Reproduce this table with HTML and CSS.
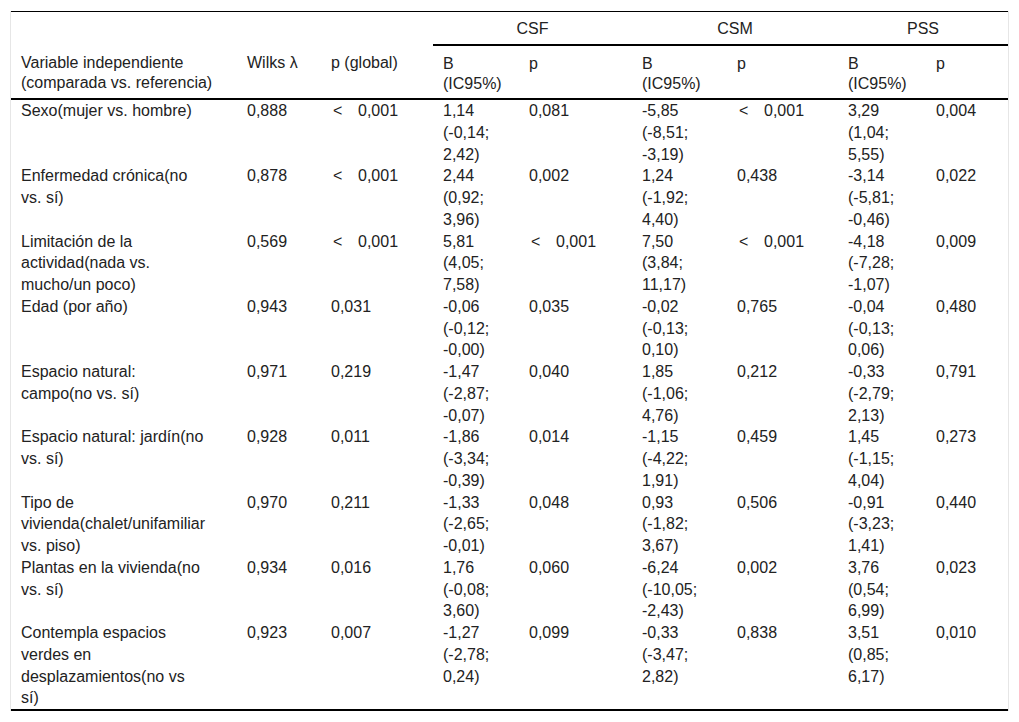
FILE: index.html
```html
<!DOCTYPE html>
<html lang="es">

<head>
    <meta charset="UTF-8">
    <meta name="viewport" content="width=device-width, initial-scale=1.0">
    <title>Análisis multivariante</title>
    <link rel="stylesheet" href="styles.css">
</head>

<body>
    <div class="table-wrap">
        <table class="results">
            <colgroup>
                <col class="c-var">
                <col class="c-wilks">
                <col class="c-pglobal">
                <col class="c-b1">
                <col class="c-p1">
                <col class="c-b2">
                <col class="c-p2">
                <col class="c-b3">
                <col class="c-p3">
            </colgroup>
            <thead>
                <tr class="head-groups">
                    <th></th>
                    <th></th>
                    <th></th>
                    <th colspan="2" class="group">CSF</th>
                    <th colspan="2" class="group">CSM</th>
                    <th colspan="2" class="group">PSS</th>
                </tr>
                <tr class="head-cols">
                    <th>Variable independiente<br>(comparada vs. referencia)</th>
                    <th>Wilks λ</th>
                    <th>p (global)</th>
                    <th>B<br>(IC95%)</th>
                    <th>p</th>
                    <th>B<br>(IC95%)</th>
                    <th>p</th>
                    <th>B<br>(IC95%)</th>
                    <th>p</th>
                </tr>
            </thead>
            <tbody>
                <tr>
                    <td><div class="var">Sexo(mujer vs. hombre)</div></td>
                    <td>0,888</td>
                    <td><span class="lt">&lt;</span>0,001</td>
                    <td><div class="est">1,14 (-0,14; 2,42)</div></td>
                    <td>0,081</td>
                    <td><div class="est">-5,85 (-8,51; -3,19)</div></td>
                    <td><span class="lt">&lt;</span>0,001</td>
                    <td><div class="est">3,29 (1,04; 5,55)</div></td>
                    <td>0,004</td>
                </tr>
                <tr>
                    <td><div class="var">Enfermedad crónica(no vs. sí)</div></td>
                    <td>0,878</td>
                    <td><span class="lt">&lt;</span>0,001</td>
                    <td><div class="est">2,44 (0,92; 3,96)</div></td>
                    <td>0,002</td>
                    <td><div class="est">1,24 (-1,92; 4,40)</div></td>
                    <td>0,438</td>
                    <td><div class="est">-3,14 (-5,81; -0,46)</div></td>
                    <td>0,022</td>
                </tr>
                <tr>
                    <td><div class="var">Limitación de la actividad(nada vs. mucho/un poco)</div></td>
                    <td>0,569</td>
                    <td><span class="lt">&lt;</span>0,001</td>
                    <td><div class="est">5,81 (4,05; 7,58)</div></td>
                    <td><span class="lt">&lt;</span>0,001</td>
                    <td><div class="est">7,50 (3,84; 11,17)</div></td>
                    <td><span class="lt">&lt;</span>0,001</td>
                    <td><div class="est">-4,18 (-7,28; -1,07)</div></td>
                    <td>0,009</td>
                </tr>
                <tr>
                    <td><div class="var">Edad (por año)</div></td>
                    <td>0,943</td>
                    <td>0,031</td>
                    <td><div class="est">-0,06 (-0,12; -0,00)</div></td>
                    <td>0,035</td>
                    <td><div class="est">-0,02 (-0,13; 0,10)</div></td>
                    <td>0,765</td>
                    <td><div class="est">-0,04 (-0,13; 0,06)</div></td>
                    <td>0,480</td>
                </tr>
                <tr>
                    <td><div class="var">Espacio natural: campo(no vs. sí)</div></td>
                    <td>0,971</td>
                    <td>0,219</td>
                    <td><div class="est">-1,47 (-2,87; -0,07)</div></td>
                    <td>0,040</td>
                    <td><div class="est">1,85 (-1,06; 4,76)</div></td>
                    <td>0,212</td>
                    <td><div class="est">-0,33 (-2,79; 2,13)</div></td>
                    <td>0,791</td>
                </tr>
                <tr>
                    <td><div class="var">Espacio natural: jardín(no vs. sí)</div></td>
                    <td>0,928</td>
                    <td>0,011</td>
                    <td><div class="est">-1,86 (-3,34; -0,39)</div></td>
                    <td>0,014</td>
                    <td><div class="est">-1,15 (-4,22; 1,91)</div></td>
                    <td>0,459</td>
                    <td><div class="est">1,45 (-1,15; 4,04)</div></td>
                    <td>0,273</td>
                </tr>
                <tr>
                    <td><div class="var">Tipo de vivienda(chalet/unifamiliar vs. piso)</div></td>
                    <td>0,970</td>
                    <td>0,211</td>
                    <td><div class="est">-1,33 (-2,65; -0,01)</div></td>
                    <td>0,048</td>
                    <td><div class="est">0,93 (-1,82; 3,67)</div></td>
                    <td>0,506</td>
                    <td><div class="est">-0,91 (-3,23; 1,41)</div></td>
                    <td>0,440</td>
                </tr>
                <tr>
                    <td><div class="var">Plantas en la vivienda(no vs. sí)</div></td>
                    <td>0,934</td>
                    <td>0,016</td>
                    <td><div class="est">1,76 (-0,08; 3,60)</div></td>
                    <td>0,060</td>
                    <td><div class="est">-6,24 (-10,05; -2,43)</div></td>
                    <td>0,002</td>
                    <td><div class="est">3,76 (0,54; 6,99)</div></td>
                    <td>0,023</td>
                </tr>
                <tr>
                    <td><div class="var">Contempla espacios verdes en desplazamientos(no vs sí)</div></td>
                    <td>0,923</td>
                    <td>0,007</td>
                    <td><div class="est">-1,27 (-2,78; 0,24)</div></td>
                    <td>0,099</td>
                    <td><div class="est">-0,33 (-3,47; 2,82)</div></td>
                    <td>0,838</td>
                    <td><div class="est">3,51 (0,85; 6,17)</div></td>
                    <td>0,010</td>
                </tr>
            </tbody>
        </table>
    </div>
</body>

</html>
```

FILE: styles.css
```css
/* Page reset */
* {
    margin: 0;
    padding: 0;
    box-sizing: border-box;
}

body {
    padding: 11px 10px 0 10px;
    background: #fff;
    color: #222;
    font-family: "Liberation Sans", Arial, sans-serif;
    font-size: 16px;
}

/* Faint frame around the table */
.table-wrap {
    border-left: 1px solid #e6e6e6;
    border-right: 1px solid #e6e6e6;
}

.results {
    width: 100%;
    table-layout: fixed;
    border-collapse: collapse;
    border-top: 1px solid #000;
    border-bottom: 2px solid #000;
}

/* Column widths */
.c-var { width: 226px; }
.c-wilks { width: 84px; }
.c-pglobal { width: 112px; }
.c-b1 { width: 86px; }
.c-p1 { width: 113px; }
.c-b2 { width: 95px; }
.c-p2 { width: 111px; }
.c-b3 { width: 88px; }
.c-p3 { width: 82px; }

/* Header */
.results th {
    font-weight: normal;
    text-align: left;
    vertical-align: top;
    line-height: 20px;
    padding: 0 10px;
}

.head-groups th {
    padding-top: 7px;
    padding-bottom: 5px;
}

.head-groups .group {
    text-align: center;
    border-bottom: 2px solid #000;
}

.head-cols th {
    padding-top: 8px;
    padding-bottom: 4px;
    border-bottom: 2px solid #000;
    white-space: nowrap;
}

/* Body cells */
.results td {
    vertical-align: top;
    line-height: 21.75px;
    padding: 0 10px;
}

.var {
    max-width: 185px;
}

.est {
    max-width: 60px;
}

/* "<" sign before small p values */
.lt {
    display: inline-block;
    width: 25px;
    margin-left: 2px;
}
```
